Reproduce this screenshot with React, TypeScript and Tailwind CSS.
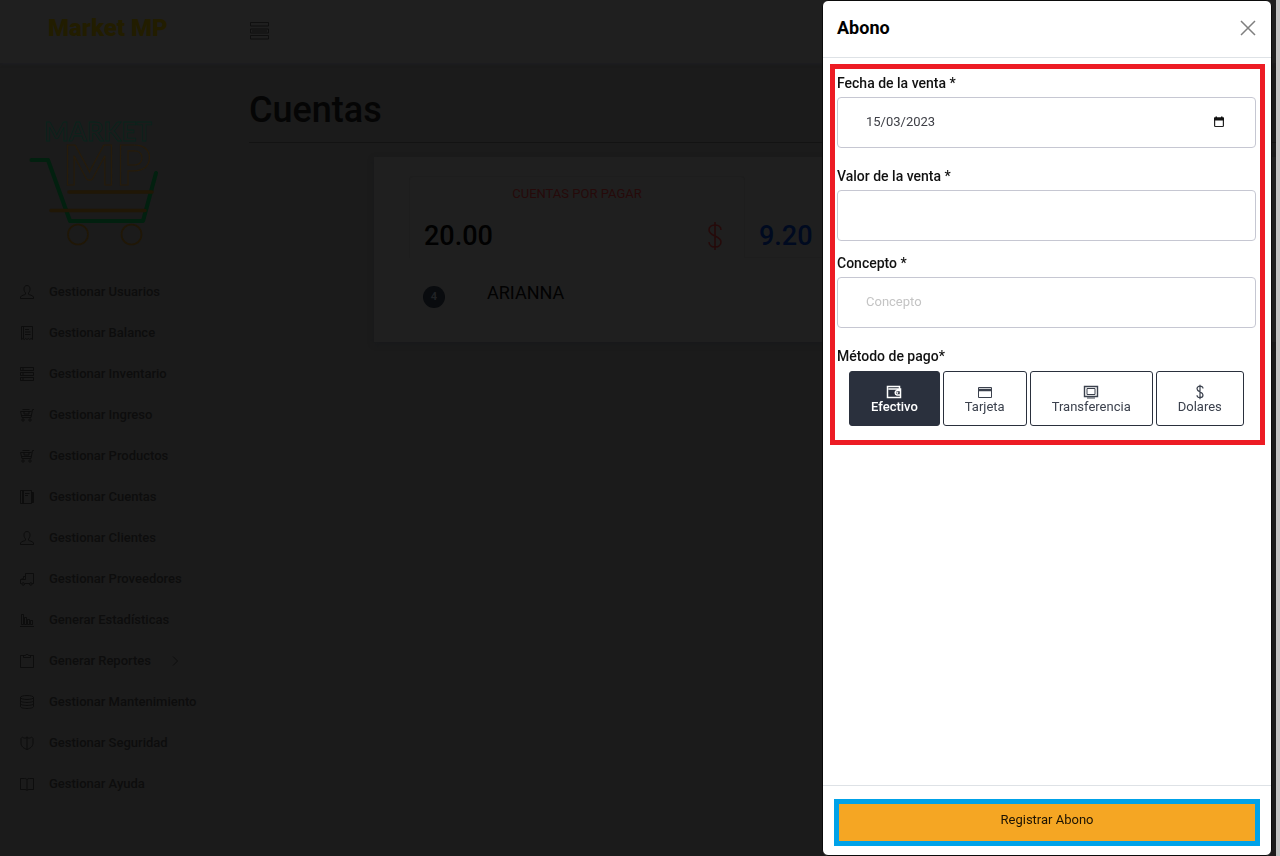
import { useState, type ReactNode } from "react";

type IconName =
  | "user" | "receipt" | "server" | "cart" | "notebook" | "truck"
  | "chart" | "clipboard" | "database" | "shield" | "book";

const icons: Record<IconName, ReactNode> = {
  user: (
    <path d="M8 1.500c-2 0-3 1.400-3 3.500 0 1.900.700 3 1.500 3.900v1.300c0 .6-4.500 1-5 2.800v1.500h13V13c-.5-1.800-5-2.200-5-2.800V8.900C10.300 8 11 6.900 11 5c0-2.100-1-3.500-3-3.500z" />
  ),
  receipt: (
    <path d="M2.500 1.500h11v13l-1.400-1-1.400 1-1.300-1-1.400 1-1.400-1-1.300 1-1.400-1-1.400 1zM4.500 1.500v12M6 4.500h4M6 7h5.500M6 9.500h5.500" />
  ),
  server: (
    <path d="M1.500 1.500h13v3h-13zM1.500 6.500h13v3h-13zM1.500 11.500h13v3h-13zM3 3h2M3 8h2M3 13h2" />
  ),
  cart: (
    <>
      <path d="M15 2.500h-1.500l-1.500 8H3L1.500 4.500h11M3.500 2.500h7M5 4.500v2.500h5V4.500M3 8.500h9" />
      <circle cx="4" cy="13" r="1.200" />
      <circle cx="11" cy="13" r="1.200" />
    </>
  ),
  notebook: (
    <path d="M1.500 1.500h11v13h-11zM4.500 1.500v13M3.500 1.500v13M6 4.500h4.500M6 6.500h3M12.500 3.500h2v10h-2M13.500 3.500v10" />
  ),
  truck: (
    <>
      <path d="M2.500 12.500h-1v-4l3-1V5.500h2v-3h8v10H13M6 12.500h4.500M6.500 5.500v3H2" />
      <circle cx="4.200" cy="13" r="1.300" />
      <circle cx="11.800" cy="13" r="1.300" />
    </>
  ),
  chart: (
    <path d="M1 14.500h14M2.500 12.500v-10h2v10zM5.500 12.500v-7h2v7zM8.500 12.500v-5h2v5zM11.500 12.500v-4h2v4z" />
  ),
  clipboard: (
    <path d="M5 2.500H1.500v12h13v-12H11M4.500 4.500v-2h2l.5-1h2l.5 1h2v2z" />
  ),
  database: (
    <>
      <ellipse cx="8" cy="3.500" rx="6.500" ry="2" />
      <path d="M1.500 3.500v9c0 1.200 2.900 2 6.500 2s6.500-.8 6.500-2v-9M1.500 6.500c0 1.200 2.900 2 6.500 2s6.500-.8 6.500-2M1.500 9.500c0 1.200 2.900 2 6.500 2s6.500-.8 6.500-2" />
    </>
  ),
  shield: (
    <path d="M8 1.500v13M8 2.500c-1.600 1-3.400.8-4.500-.5L2 3.500V8c0 3.500 3 5.500 6 6.500 3-1 6-3 6-6.500V3.500L12.500 2c-1.100 1.300-2.900 1.500-4.500.5z" />
  ),
  book: (
    <path d="M8 3.500c-.7-1-1.500-1-2.500-1h-4v11h4.500c1 0 1.500.3 2 1 .5-.7 1-1 2-1h4.500v-11h-4c-1 0-1.800 0-2.500 1zM8 3.500v11" />
  ),
};

const menu: { icon: IconName; label: string; expandable?: boolean }[] = [
  { icon: "user", label: "Gestionar Usuarios" },
  { icon: "receipt", label: "Gestionar Balance" },
  { icon: "server", label: "Gestionar Inventario" },
  { icon: "cart", label: "Gestionar Ingreso" },
  { icon: "cart", label: "Gestionar Productos" },
  { icon: "notebook", label: "Gestionar Cuentas" },
  { icon: "user", label: "Gestionar Clientes" },
  { icon: "truck", label: "Gestionar Proveedores" },
  { icon: "chart", label: "Generar Estadísticas" },
  { icon: "clipboard", label: "Generar Reportes", expandable: true },
  { icon: "database", label: "Gestionar Mantenimiento" },
  { icon: "shield", label: "Gestionar Seguridad" },
  { icon: "book", label: "Gestionar Ayuda" },
];

function MarketLogo() {
  return (
    <svg viewBox="0 0 132 132" className="ml-7 h-[132px] w-[132px] shrink-0" fill="none" role="img" aria-label="Market MP">
      <text x="16" y="26" fontFamily="Lato, sans-serif" fontWeight="700" fontSize="26" stroke="#08241c" strokeWidth=".8">
        MARKET
      </text>
      <text x="35" y="70" fontFamily="Lato, sans-serif" fontWeight="700" fontSize="56" stroke="#271c0a" strokeWidth="1.200">
        MP
      </text>
      <g strokeLinecap="round" strokeLinejoin="round" strokeWidth="4">
        <path d="M3.500 45H20l22 61h73l13-48" stroke="#02200f" />
        <path d="M41 77h83M23 95.500h94" stroke="#201706" strokeWidth="3.600" />
      </g>
      <circle cx="50" cy="119.500" r="10" stroke="#201706" strokeWidth="1.600" />
      <circle cx="103.500" cy="119.500" r="10" stroke="#201706" strokeWidth="1.600" />
    </svg>
  );
}

function Dollar({ className }: { className: string }) {
  return (
    <svg viewBox="0 0 16 30" className={className} fill="none" stroke="currentColor" strokeWidth="1.500" aria-hidden="true">
      <path d="M14 9c0-3-2.500-5-6-5S2 6 2 9c0 6.500 12 5.500 12 12 0 3-2.500 5-6 5s-6-2-6-5M8 1v28" />
    </svg>
  );
}

function Sidebar() {
  return (
    <aside className="flex w-[240px] shrink-0 flex-col pt-[52px]">
      <MarketLogo />
      <nav className="mt-6 flex flex-col" aria-label="Principal">
        {menu.map((item) => (
          <a key={item.label} href="#" className="flex h-[41px] items-center pl-[19px] text-[13px] font-medium text-[#0d0d0d]">
            <svg viewBox="0 0 16 16" className="mr-3.5 h-4 w-4" fill="none" stroke="currentColor" strokeWidth="1" aria-hidden="true">
              {icons[item.icon]}
            </svg>
            {item.label}
            {item.expandable && (
              <svg viewBox="0 0 10 12" className="ml-5 h-3 w-2.5" fill="none" stroke="currentColor" aria-hidden="true">
                <path d="M2 1.500 6.500 6 2 10.500" />
              </svg>
            )}
          </a>
        ))}
      </nav>
    </aside>
  );
}

function Accounts() {
  return (
    <main className="min-w-0 flex-1 pl-[9px] pt-5">
      <h1 className="border-b border-[#131313] pb-[5px] text-4xl leading-[54px] font-medium text-[#050505]">Cuentas</h1>
      <section className="mt-3.5 ml-[125px] h-[185px] bg-[#1f1f1f] px-[35px] pt-[19px] shadow-[0_2px_5px_#18191b]">
        <div className="flex">
          <div className="flex h-[82px] w-[336px] flex-col rounded-t-sm border border-b-0 border-[#1d1d1d] px-3.5 pt-[7px]">
            <span className="text-center text-[13px] leading-5 text-[#260a0a]">CUENTAS POR PAGAR</span>
            <div className="mt-3.5 flex items-center justify-between pr-[7px]">
              <span className="text-[27px] leading-9 font-medium text-[#010101]">20.00</span>
              <Dollar className="h-[30px] w-4 text-[#260a0a]" />
            </div>
          </div>
          <div className="flex h-[82px] flex-1 items-start border-b border-[#1d1d1d] pt-[42px] pl-3.5">
            <span className="text-[27px] leading-9 font-medium text-[#000a20]">9.20</span>
          </div>
        </div>
        <div className="flex items-center pt-5 pl-3.5">
          <span className="mt-2 flex h-[22px] w-[22px] items-center justify-center rounded-full bg-[#090b0e] text-[11px] font-bold text-[#202225]">4</span>
          <span className="ml-[42px] text-lg leading-6 text-[#020202]">ARIANNA</span>
        </div>
      </section>
    </main>
  );
}

const methodIcons = {
  wallet: (
    <>
      <path d="M13.500 5V2.500h-12v11h13V5h-12M14.500 6.500H11a2.300 2.300 0 0 0 0 4.500h3.500" strokeWidth="1.500" />
      <circle cx="11.300" cy="8.800" r=".6" fill="currentColor" />
    </>
  ),
  card: (
    <>
      <path d="M1.500 3.500h13v10h-13z" />
      <path d="M1 6h14" strokeWidth="2.500" />
    </>
  ),
  monitor: (
    <>
      <path d="M1.500 2.500h13v10h-13z" strokeWidth="1.400" />
      <path d="M4 4.500h8v6H4zM4 14h8" />
    </>
  ),
  dollar: <path d="M11 4.500C11 3 9.800 2.200 8 2.200S5 3.200 5 4.800C5 8.400 11 7.400 11 11c0 1.700-1.200 2.700-3 2.700S5 12.800 5 11.200M8 .8v14.400" strokeWidth="1.200" />,
};

const methods: { icon: keyof typeof methodIcons; label: string }[] = [
  { icon: "wallet", label: "Efectivo" },
  { icon: "card", label: "Tarjeta" },
  { icon: "monitor", label: "Transferencia" },
  { icon: "dollar", label: "Dolares" },
];

const fieldClass =
  "h-[51px] w-full rounded border border-[#c6c7d2] bg-white px-7 pb-0.5 text-[13px] text-[#3f4047] outline-none placeholder:text-[#c4c4c4]";
const labelClass = "mb-1 block text-sm leading-5 font-medium text-[#111111]";

function PaymentDrawer() {
  const [date, setDate] = useState("15/03/2023");
  const [method, setMethod] = useState("Efectivo");

  return (
    <div role="dialog" aria-labelledby="drawer-title" className="fixed inset-y-0 right-2 flex w-[450px] flex-col rounded-md border border-[#0b0b0b] bg-white">
      <header className="flex h-[57px] shrink-0 items-center justify-between border-b border-[#dee2e6] pr-[15px] pb-0.5 pl-3.5">
        <h2 id="drawer-title" className="text-lg font-bold text-black">Abono</h2>
        <button type="button" aria-label="Cerrar">
          <svg viewBox="0 0 16 16" className="h-4 w-4" fill="none" stroke="#7f7f7f" strokeWidth="1.500" aria-hidden="true">
            <path d="m1 1 14 14M15 1 1 15" />
          </svg>
        </button>
      </header>

      <form id="payment-form" className="min-h-0 flex-1 pt-1.5 pr-1.5 pl-[7px]" onSubmit={(e) => e.preventDefault()}>
        <div className="border-[5px] border-[#ed1c24] pt-1 pr-1 pb-3.5 pl-0.5">
          <div className="mb-[18px]">
            <label htmlFor="date" className={labelClass}>Fecha de la venta *</label>
            <div className="relative">
              <input id="date" type="text" inputMode="numeric" value={date} onChange={(e) => setDate(e.target.value)} className={fieldClass} />
              <button type="button" aria-label="Abrir calendario" className="absolute top-[18px] right-[30px]">
                <svg viewBox="0 0 14 14" className="h-3.5 w-3.5" fill="none" aria-hidden="true">
                  <rect x="2.600" y="3" width="8.800" height="8.500" rx=".8" stroke="#222" strokeWidth="1.200" />
                  <path d="M2 2.500h10v3H2zM3.500 1.500h1.500v1H3.500zM9 1.500h1.500v1H9z" fill="#111" />
                </svg>
              </button>
            </div>
          </div>
          <div className="mb-3">
            <label htmlFor="amount" className={labelClass}>Valor de la venta *</label>
            <input id="amount" type="text" inputMode="decimal" className={fieldClass} />
          </div>
          <div className="mb-[18px]">
            <label htmlFor="concept" className={labelClass}>Concepto *</label>
            <input id="concept" type="text" placeholder="Concepto" className={fieldClass} />
          </div>
          <span id="method-label" className={labelClass}>Método de pago*</span>
          <div role="group" aria-labelledby="method-label" className="flex gap-[3px] pt-px pl-3">
            {methods.map((m) => (
              <button
                key={m.label}
                type="button"
                aria-pressed={method === m.label}
                onClick={() => setMethod(m.label)}
                className={
                  method === m.label
                    ? "flex h-[55px] flex-col items-center justify-center rounded-[3px] border border-[#2a303d] bg-[#2a303d] px-[21px] text-[13px] leading-[14px] font-medium text-white"
                    : "flex h-[55px] flex-col items-center justify-center rounded-[3px] border border-[#2a303d] bg-white px-[21px] text-[13px] leading-[14px] text-[#3b414d]"
                }
              >
                <svg viewBox="0 0 16 16" className="h-4 w-4" fill="none" stroke="currentColor" aria-hidden="true">
                  {methodIcons[m.icon]}
                </svg>
                {m.label}
              </button>
            ))}
          </div>
        </div>
      </form>

      <footer className="shrink-0 border-t border-[#dee2e6] pt-[13px] pr-[11px] pb-[9px] pl-[11px]">
        <button type="submit" form="payment-form" className="block h-[47px] w-full border-[5px] border-[#00a2e8] bg-[#f5a623] pb-1.5 text-[13px] text-[#1c1303]">
          Registrar Abono
        </button>
      </footer>
    </div>
  );
}

export default function App() {
  return (
    <div className="flex min-h-screen bg-[#1b1b1b] font-[Roboto,sans-serif]">
      <div className="flex min-w-0 flex-1 flex-col">
        <header className="flex h-[63px] shrink-0 items-center bg-[#1f1f1f] pl-12 shadow-[0_1px_3px_#1d1e22]">
          <a href="#" className="mb-2 w-[202px] font-[Impact,Roboto,sans-serif] text-2xl font-black text-[#221d00]">Market MP</a>
          <button type="button" aria-label="Menú" className="mb-0.5">
            <svg viewBox="0 0 20 18" className="h-[18px] w-5" fill="none" stroke="#0f0f0f" aria-hidden="true">
              <path d="M.5.500h18v3.500H.500zM.5 7h18v4H.500zM.5 13.500h18v3.500H.500zM2 9h15" />
            </svg>
          </button>
        </header>
        <div className="flex flex-1">
          <Sidebar />
          <Accounts />
        </div>
      </div>
      <div className="w-1 shrink-0 bg-[#c1c1c1]" aria-hidden="true" />
      <PaymentDrawer />
    </div>
  );
}
